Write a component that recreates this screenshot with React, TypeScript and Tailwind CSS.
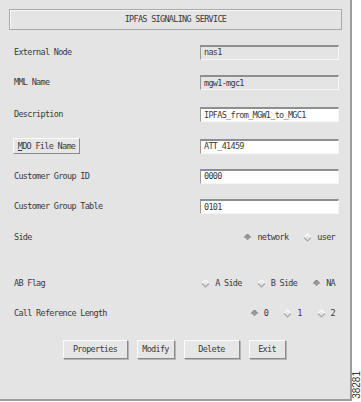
import React from "react";

const font = { fontFamily: '"DejaVu Sans Mono", "Liberation Mono", monospace' };

function Diamond({ on }: { on: boolean }) {
  return (
    <svg width="9" height="9" viewBox="0 0 9 9" className="shrink-0">
      {on ? (
        <>
          <polygon points="4.5,1 8,4.5 4.5,8 1,4.5" fill="#999" />
          <polyline points="1,4.5 4.5,1 8,4.5" fill="none" stroke="#777" strokeWidth="1" />
          <polyline points="1,4.5 4.5,8 8,4.5" fill="none" stroke="#f4f4f4" strokeWidth="1" />
        </>
      ) : (
        <>
          <polyline points="1,4.5 4.5,1 8,4.5" fill="none" stroke="#fbfbfb" strokeWidth="1.2" />
          <polyline points="1,4.5 4.5,8 8,4.5" fill="none" stroke="#a8a8a8" strokeWidth="1.2" />
        </>
      )}
    </svg>
  );
}

function Field({ value, editable }: { value: string; editable?: boolean }) {
  return (
    <div
      className={
        "w-[139px] h-[15px] flex items-center pl-[3px] border-t-2 border-l border-b border-r border-t-[#8e8e8e] border-l-[#9a9a9a] border-b-[#f6f6f6] border-r-[#f6f6f6] " +
        (editable ? "bg-white" : "bg-[#e4e4e4]")
      }
    >
      {value}
    </div>
  );
}

function Row({ h, children }: { h: string; children: React.ReactNode }) {
  return <div className={"flex items-center justify-between pl-[14px] pr-[11px] " + h}>{children}</div>;
}

function Radios({ items }: { items: { label: string; on: boolean }[] }) {
  return (
    <div className="flex items-center gap-[15px] pr-[4px]">
      {items.map((it) => (
        <div key={it.label} className="flex items-center gap-[5px]">
          <Diamond on={it.on} />
          <span>{it.label}</span>
        </div>
      ))}
    </div>
  );
}

function Btn({ label, w }: { label: string; w: string }) {
  return (
    <div
      className={
        "h-[19px] flex items-center justify-center bg-[#e6e6e6] border border-t-[#fbfbfb] border-l-[#fbfbfb] border-b-[#8a8a8a] border-r-[#8a8a8a] shadow-[1px_1px_0_#b4b4b4] " +
        w
      }
    >
      {label}
    </div>
  );
}

export default function App() {
  return (
    <div className="w-[361px] h-[402px] bg-white flex" style={font}>
      <div className="w-[352px] h-[401px] bg-[#e4e4e4] border-r-2 border-b-2 border-[#9c9c9c] flex flex-col text-[8.5px] tracking-[-0.7px] text-[#3a3a3a] leading-none">
        <div className="mx-[9px] mt-[9px] h-[21px] w-[333px] border border-[#a9a9a9] shadow-[inset_1px_1px_0_#f8f8f8] flex items-center justify-center">
          IPFAS SIGNALING SERVICE
        </div>

        <div className="h-[7px]" />
        <Row h="h-[30px]">
          <span>External Node</span>
          <Field value="nas1" />
        </Row>
        <Row h="h-[31px]">
          <span>MML Name</span>
          <Field value="mgw1-mgc1" />
        </Row>
        <Row h="h-[33px]">
          <span>Description</span>
          <Field value="IPFAS_from_MGW1_to_MGC1" editable />
        </Row>
        <Row h="h-[30px]">
          <div className="-ml-[1px] w-[67px] h-[16px] flex items-center justify-center bg-[#e6e6e6] border border-t-[#fbfbfb] border-l-[#fbfbfb] border-b-[#8a8a8a] border-r-[#8a8a8a]">
            <span>
              <span className="underline">M</span>DO File Name
            </span>
          </div>
          <Field value="ATT_41459" editable />
        </Row>
        <Row h="h-[30px]">
          <span>Customer Group ID</span>
          <Field value="0000" editable />
        </Row>
        <Row h="h-[31px]">
          <span>Customer Group Table</span>
          <Field value="0101" editable />
        </Row>
        <Row h="h-[31px]">
          <span>Side</span>
          <Radios
            items={[
              { label: "network", on: true },
              { label: "user", on: false },
            ]}
          />
        </Row>
        <div className="h-[15px]" />
        <Row h="h-[30px]">
          <span>AB Flag</span>
          <Radios
            items={[
              { label: "A Side", on: false },
              { label: "B Side", on: false },
              { label: "NA", on: true },
            ]}
          />
        </Row>
        <Row h="h-[30px]">
          <span>Call Reference Length</span>
          <Radios
            items={[
              { label: "0", on: true },
              { label: "1", on: false },
              { label: "2", on: false },
            ]}
          />
        </Row>

        <div className="mt-[12px] flex justify-center gap-[9px] pr-[2px]">
          <Btn label="Properties" w="w-[65px]" />
          <Btn label="Modify" w="w-[38px]" />
          <Btn label="Delete" w="w-[56px]" />
          <Btn label="Exit" w="w-[37px]" />
        </div>
      </div>
      <div className="flex-1 flex items-end justify-center pb-[3px]">
        <span
          className="[writing-mode:vertical-rl] rotate-180 text-[10px] text-[#333] leading-none"
          style={{ fontFamily: '"Liberation Sans", Arial, sans-serif' }}
        >
          38281
        </span>
      </div>
    </div>
  );
}
